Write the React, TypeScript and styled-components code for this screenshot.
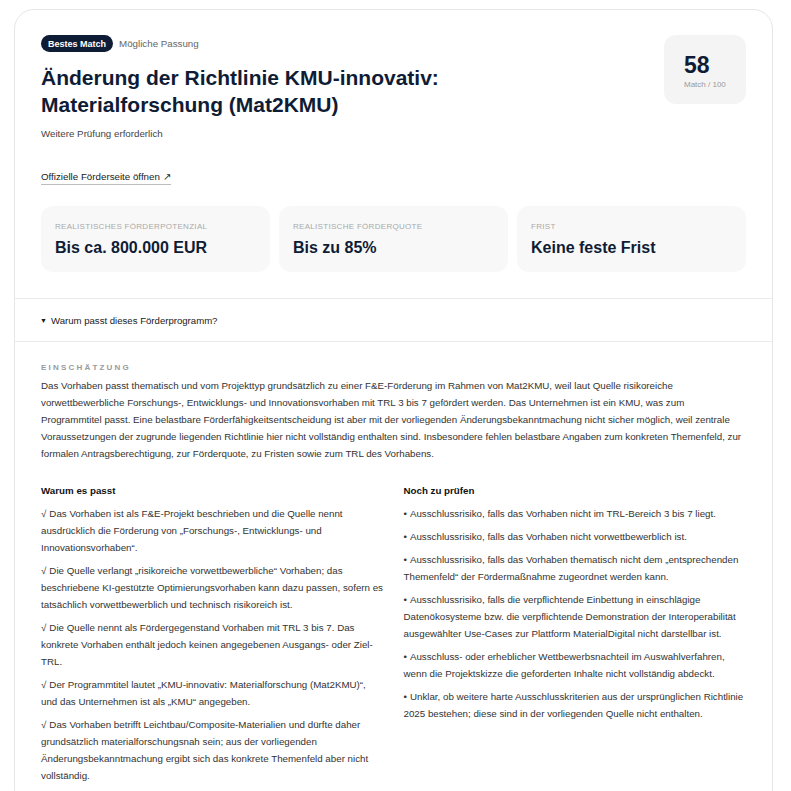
import React from "react";
import styled, { createGlobalStyle } from "styled-components";

const GlobalStyle = createGlobalStyle`
  html, body {
    margin: 0;
    padding: 0;
    background: #ffffff;
  }
  body {
    font-family: "Liberation Sans", Arial, sans-serif;
    color: #222;
  }
`;

const Page = styled.div`
  padding: 9px 18px 0 14px;
`;

const Card = styled.article`
  border: 1px solid #e6e6e6;
  border-radius: 20px;
  background: #fff;
  overflow: hidden;
`;

const Header = styled.header`
  padding: 25px 26px 26px 26px;
`;

const TopRow = styled.div`
  display: flex;
  justify-content: space-between;
  align-items: flex-start;
  gap: 24px;
`;

const TitleBlock = styled.div`
  display: flex;
  flex-direction: column;
  align-items: flex-start;
`;

const BadgeRow = styled.div`
  display: flex;
  align-items: center;
  gap: 6px;
`;

const Badge = styled.span`
  display: inline-flex;
  align-items: center;
  height: 17px;
  padding: 0 7px;
  border-radius: 9px;
  background: #0f1c35;
  color: #fff;
  font-size: 9px;
  font-weight: 700;
`;

const BadgeNote = styled.span`
  font-size: 9.75px;
  color: #666;
`;

const Title = styled.h1`
  margin: 12px 0 0;
  font-size: 21px;
  line-height: 27px;
  font-weight: 700;
  color: #0f1c35;
`;

const Subtitle = styled.p`
  margin: 9px 0 0;
  font-size: 9.75px;
  line-height: 14px;
  color: #444;
`;

const Link = styled.a`
  margin-top: 29px;
  font-size: 9.75px;
  line-height: 13px;
  color: #1a1a1a;
  text-decoration: none;
  padding-bottom: 1px;
  border-bottom: 1px solid #bdbdbd;
`;

const Score = styled.div`
  flex: 0 0 auto;
  width: 82px;
  height: 69px;
  box-sizing: border-box;
  padding: 18px 0 0 20px;
  border-radius: 12px;
  background: #f4f4f4;
`;

const ScoreValue = styled.div`
  font-size: 23px;
  line-height: 24px;
  font-weight: 700;
  color: #0f1c35;
`;

const ScoreLabel = styled.div`
  margin-top: 3px;
  font-size: 8px;
  color: #9a9a9a;
`;

const Stats = styled.div`
  margin-top: 21px;
  display: grid;
  grid-template-columns: repeat(3, 1fr);
  gap: 9px;
`;

const Stat = styled.div`
  height: 66px;
  box-sizing: border-box;
  padding: 16px 14px 0;
  border-radius: 12px;
  background: #f8f8f8;
`;

const StatLabel = styled.div`
  font-size: 8px;
  line-height: 10px;
  letter-spacing: 0.3px;
  text-transform: uppercase;
  color: #aaa;
`;

const StatValue = styled.div`
  margin-top: 7px;
  font-size: 16px;
  line-height: 18px;
  font-weight: 700;
  color: #0f1c35;
`;

const Toggle = styled.div`
  display: flex;
  align-items: center;
  gap: 4px;
  height: 42px;
  padding: 0 25px;
  border-top: 1px solid #ececec;
  border-bottom: 1px solid #ececec;
  font-size: 9.6px;
  color: #1a1a1a;
`;

const Caret = styled.span`
  font-size: 7px;
`;

const Body = styled.section`
  padding: 21px 26px 24px;
`;

const SectionLabel = styled.div`
  font-size: 8px;
  line-height: 10px;
  font-weight: 700;
  letter-spacing: 2.2px;
  text-transform: uppercase;
  color: #9a9a9a;
`;

const Paragraph = styled.p`
  margin: 4px 0 0;
  font-size: 9.75px;
  line-height: 17px;
  color: #333;
`;

const Columns = styled.div`
  margin-top: 20px;
  display: grid;
  grid-template-columns: 1fr 1fr;
  gap: 20px;
`;

const ColumnTitle = styled.h3`
  margin: 0 0 6px;
  font-size: 9.75px;
  line-height: 17px;
  font-weight: 700;
  color: #111;
`;

const List = styled.ul`
  margin: 0;
  padding: 0;
  list-style: none;
  display: flex;
  flex-direction: column;
  gap: 6px;
`;

const Item = styled.li`
  font-size: 9.75px;
  line-height: 17px;
  color: #333;
`;

const Marker = styled.span`
  margin-right: 3px;
`;

const reasons = [
  "Das Vorhaben ist als F&E-Projekt beschrieben und die Quelle nennt ausdrücklich die Förderung von „Forschungs-, Entwicklungs- und Innovationsvorhaben“.",
  "Die Quelle verlangt „risikoreiche vorwettbewerbliche“ Vorhaben; das beschriebene KI-gestützte Optimierungsvorhaben kann dazu passen, sofern es tatsächlich vorwettbewerblich und technisch risikoreich ist.",
  "Die Quelle nennt als Fördergegenstand Vorhaben mit TRL 3 bis 7. Das konkrete Vorhaben enthält jedoch keinen angegebenen Ausgangs- oder Ziel-TRL.",
  "Der Programmtitel lautet „KMU-innovativ: Materialforschung (Mat2KMU)“, und das Unternehmen ist als „KMU“ angegeben.",
  "Das Vorhaben betrifft Leichtbau/Composite-Materialien und dürfte daher grundsätzlich materialforschungsnah sein; aus der vorliegenden Änderungsbekanntmachung ergibt sich das konkrete Themenfeld aber nicht vollständig.",
];

const checks = [
  "Ausschlussrisiko, falls das Vorhaben nicht im TRL-Bereich 3 bis 7 liegt.",
  "Ausschlussrisiko, falls das Vorhaben nicht vorwettbewerblich ist.",
  "Ausschlussrisiko, falls das Vorhaben thematisch nicht dem „entsprechenden Themenfeld“ der Fördermaßnahme zugeordnet werden kann.",
  "Ausschlussrisiko, falls die verpflichtende Einbettung in einschlägige Datenökosysteme bzw. die verpflichtende Demonstration der Interoperabilität ausgewählter Use-Cases zur Plattform MaterialDigital nicht darstellbar ist.",
  "Ausschluss- oder erheblicher Wettbewerbsnachteil im Auswahlverfahren, wenn die Projektskizze die geforderten Inhalte nicht vollständig abdeckt.",
  "Unklar, ob weitere harte Ausschlusskriterien aus der ursprünglichen Richtlinie 2025 bestehen; diese sind in der vorliegenden Quelle nicht enthalten.",
];

const stats = [
  { label: "Realistisches Förderpotenzial", value: "Bis ca. 800.000 EUR" },
  { label: "Realistische Förderquote", value: "Bis zu 85%" },
  { label: "Frist", value: "Keine feste Frist" },
];

export default function App() {
  return (
    <Page>
      <GlobalStyle />
      <Card>
        <Header>
          <TopRow>
            <TitleBlock>
              <BadgeRow>
                <Badge>Bestes Match</Badge>
                <BadgeNote>Mögliche Passung</BadgeNote>
              </BadgeRow>
              <Title>
                Änderung der Richtlinie KMU-innovativ:
                <br />
                Materialforschung (Mat2KMU)
              </Title>
              <Subtitle>Weitere Prüfung erforderlich</Subtitle>
              <Link href="#">Offizielle Förderseite öffnen ↗</Link>
            </TitleBlock>
            <Score>
              <ScoreValue>58</ScoreValue>
              <ScoreLabel>Match / 100</ScoreLabel>
            </Score>
          </TopRow>
          <Stats>
            {stats.map((s) => (
              <Stat key={s.label}>
                <StatLabel>{s.label}</StatLabel>
                <StatValue>{s.value}</StatValue>
              </Stat>
            ))}
          </Stats>
        </Header>

        <Toggle>
          <Caret>▼</Caret>
          Warum passt dieses Förderprogramm?
        </Toggle>

        <Body>
          <SectionLabel>Einschätzung</SectionLabel>
          <Paragraph>
            Das Vorhaben passt thematisch und vom Projekttyp grundsätzlich zu einer F&amp;E-Förderung im
            Rahmen von Mat2KMU, weil laut Quelle risikoreiche vorwettbewerbliche Forschungs-,
            Entwicklungs- und Innovationsvorhaben mit TRL 3 bis 7 gefördert werden. Das Unternehmen ist
            ein KMU, was zum Programmtitel passt. Eine belastbare Förderfähigkeitsentscheidung ist aber
            mit der vorliegenden Änderungsbekanntmachung nicht sicher möglich, weil zentrale
            Voraussetzungen der zugrunde liegenden Richtlinie hier nicht vollständig enthalten sind.
            Insbesondere fehlen belastbare Angaben zum konkreten Themenfeld, zur formalen
            Antragsberechtigung, zur Förderquote, zu Fristen sowie zum TRL des Vorhabens.
          </Paragraph>
          <Columns>
            <div>
              <ColumnTitle>Warum es passt</ColumnTitle>
              <List>
                {reasons.map((r) => (
                  <Item key={r}>
                    <Marker>√</Marker>
                    {r}
                  </Item>
                ))}
              </List>
            </div>
            <div>
              <ColumnTitle>Noch zu prüfen</ColumnTitle>
              <List>
                {checks.map((c) => (
                  <Item key={c}>
                    <Marker>•</Marker>
                    {c}
                  </Item>
                ))}
              </List>
            </div>
          </Columns>
        </Body>
      </Card>
    </Page>
  );
}
